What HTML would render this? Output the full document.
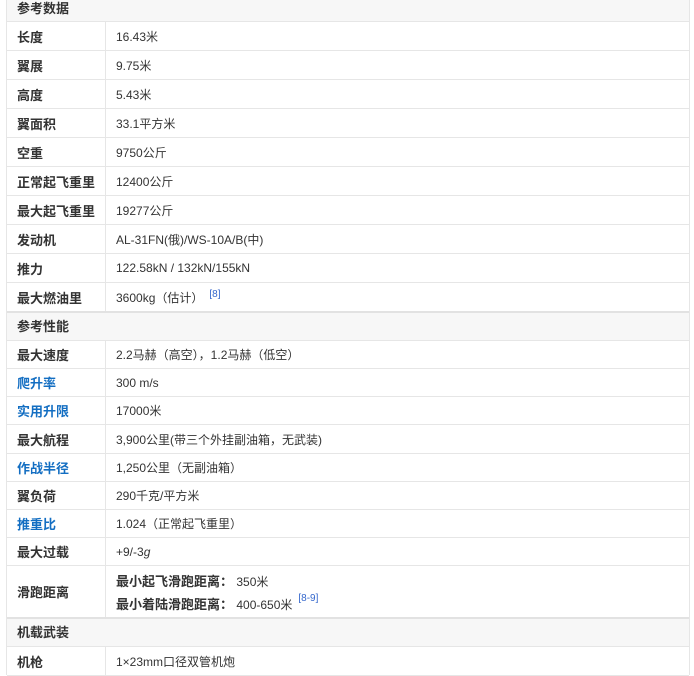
<!DOCTYPE html><html><head><meta charset="utf-8"><style>
body{margin:0;background:#fff;font-family:"Liberation Sans","Noto Sans CJK SC",sans-serif;color:#333;font-size:12px;}
.w{position:absolute;left:6px;top:0;width:682px;height:675px;border-left:1px solid #e6e6e6;border-right:1px solid #e6e6e6;}
.r{position:absolute;left:0;width:682px;border-bottom:1px solid #e6e6e6;box-sizing:border-box;}
.h{background:#f7f7f7;font-weight:bold;font-size:13px;padding-left:10px;border-top:1px solid #e2e2e2;}
.l{position:absolute;left:0;top:0;bottom:0;width:99px;border-right:1px solid #e6e6e6;font-weight:bold;font-size:13px;padding-left:10px;box-sizing:border-box;display:flex;align-items:center;}
.v{position:absolute;left:109px;top:0;bottom:0;display:flex;align-items:center;}
.b{color:#136ec2}
sup{color:#3366cc;font-size:10px;margin-left:6px;position:relative;top:-3px}
</style></head><body><div class="w">
<div class="r h" style="top:-6px;height:28px;line-height:29px;border-top:none">参考数据</div>
<div class="r" style="top:22px;height:29px"><div class="l">长度</div><div class="v">16.43米</div></div>
<div class="r" style="top:51px;height:29px"><div class="l">翼展</div><div class="v">9.75米</div></div>
<div class="r" style="top:80px;height:29px"><div class="l">高度</div><div class="v">5.43米</div></div>
<div class="r" style="top:109px;height:29px"><div class="l">翼面积</div><div class="v">33.1平方米</div></div>
<div class="r" style="top:138px;height:29px"><div class="l">空重</div><div class="v">9750公斤</div></div>
<div class="r" style="top:167px;height:29px"><div class="l">正常起飞重里</div><div class="v">12400公斤</div></div>
<div class="r" style="top:196px;height:29px"><div class="l">最大起飞重里</div><div class="v">19277公斤</div></div>
<div class="r" style="top:225px;height:29px"><div class="l">发动机</div><div class="v">AL-31FN(俄)/WS-10A/B(中)</div></div>
<div class="r" style="top:254px;height:29px"><div class="l">推力</div><div class="v">122.58kN / 132kN/155kN</div></div>
<div class="r" style="top:283px;height:29px"><div class="l">最大燃油里</div><div class="v">3600kg（估计）<sup>[8]</sup></div></div>
<div class="r h" style="top:311px;height:30px;line-height:28px;border-top:2px solid #e2e2e2">参考性能</div>
<div class="r" style="top:341px;height:28px"><div class="l">最大速度</div><div class="v">2.2马赫（高空），1.2马赫（低空）</div></div>
<div class="r" style="top:369px;height:28px"><div class="l b">爬升率</div><div class="v">300 m/s</div></div>
<div class="r" style="top:397px;height:28px"><div class="l b">实用升限</div><div class="v">17000米</div></div>
<div class="r" style="top:425px;height:29px"><div class="l">最大航程</div><div class="v">3,900公里(带三个外挂副油箱，无武装)</div></div>
<div class="r" style="top:454px;height:28px"><div class="l b">作战半径</div><div class="v">1,250公里（无副油箱）</div></div>
<div class="r" style="top:482px;height:28px"><div class="l">翼负荷</div><div class="v">290千克/平方米</div></div>
<div class="r" style="top:510px;height:28px"><div class="l b">推重比</div><div class="v">1.024（正常起飞重里）</div></div>
<div class="r" style="top:538px;height:28px"><div class="l">最大过载</div><div class="v">+9/-3<i>g</i></div></div>
<div class="r" style="top:566px;height:52px"><div class="l">滑跑距离</div><div class="v" style="display:block;padding-top:6px;line-height:20px"><b style="font-size:13px">最小起飞滑跑距离：</b> 350米<br><b style="font-size:13px">最小着陆滑跑距离：</b> 400-650米<sup>[8-9]</sup></div></div>
<div class="r h" style="top:617px;height:30px;line-height:28px;border-top:2px solid #e2e2e2">机载武装</div>
<div class="r" style="top:647px;height:29px"><div class="l">机枪</div><div class="v">1×23mm口径双管机炮</div></div>
</div></body></html>
